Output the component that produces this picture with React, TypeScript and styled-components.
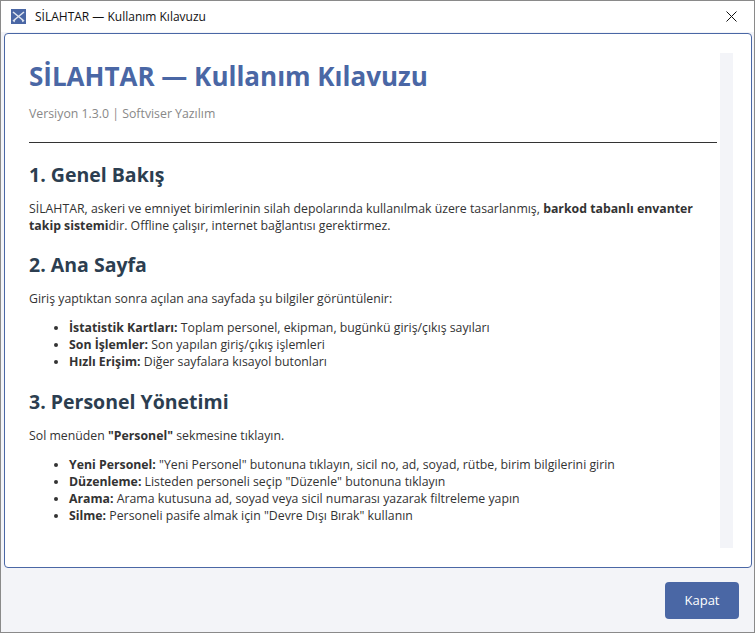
import React from 'react';
import styled, { createGlobalStyle } from 'styled-components';

const Global = createGlobalStyle`
  html, body { margin: 0; padding: 0; background: #f3f4f8; }
  body { font-family: "Open Sans", "Noto Sans", sans-serif; }
  * { box-sizing: border-box; }
`;

const Window = styled.div`
  width: 755px;
  height: 633px;
  border: 1px solid #8a8a8a;
  display: flex;
  flex-direction: column;
  background: #f3f4f8;
`;

const TitleBar = styled.div`
  height: 31px;
  background: #fff;
  display: flex;
  align-items: center;
  padding-left: 10px;
  font-size: 12px;
  color: #111;
`;

const TitleText = styled.span`
  margin-left: 9px;
  flex: 1;
`;

const CloseBtn = styled.div`
  width: 46px;
  display: flex;
  justify-content: center;
  align-items: center;
`;

const Panel = styled.div`
  margin: 1px 2px 0 3px;
  height: 535px;
  background: #fff;
  border: 1px solid #4a67a5;
  border-radius: 4px;
  display: flex;
  overflow: hidden;
`;

const Scroll = styled.div`
  flex: 1;
  padding: 18px 3px 0 24px;
  overflow: hidden;
  color: #333;
  font-size: 12.3px;
`;

const Track = styled.div`
  width: 13px;
  margin: 19px 18px 19px 0;
  background: #f3f4f8;
`;

const H1 = styled.h1`
  margin: 7px 0 0;
  font-size: 26px;
  font-weight: 700;
  color: #4a67a5;
  line-height: 34px;
`;

const Version = styled.div`
  margin-top: 12px;
  color: #888;
  font-size: 12.3px;
`;

const Rule = styled.hr`
  border: none;
  border-top: 1px solid #333;
  margin: 20px 0 18px;
`;

const H2 = styled.h2`
  margin: 0 0 11px;
  font-size: 19.5px;
  font-weight: 700;
  color: #2c3e50;
  line-height: 28px;
`;

const P = styled.p`
  margin: 0 0 17px;
  line-height: 17px;
  width: 680px;
`;

const List = styled.ul`
  margin: -5px 0 18px;
  padding-left: 40px;
  line-height: 17px;
`;

const App: React.FC = () => (
  <Window>
    <Global />
    <TitleBar>
      <svg width="15" height="15" viewBox="0 0 15 15">
        <rect width="15" height="15" fill="#4a67a5" />
        <path d="M2 3 L13 12 M13 3 L2 12" stroke="#dde3ee" strokeWidth="1.6" />
        <path d="M4 10 L3 13 M11 10 L12 13" stroke="#dde3ee" strokeWidth="1.2" />
      </svg>
      <TitleText>SİLAHTAR — Kullanım Kılavuzu</TitleText>
      <CloseBtn>
        <svg width="11" height="11" viewBox="0 0 11 11">
          <path d="M0.5 0.5 L10.5 10.5 M10.5 0.5 L0.5 10.5" stroke="#111" strokeWidth="1" />
        </svg>
      </CloseBtn>
    </TitleBar>
    <Panel>
      <Scroll>
        <H1>SİLAHTAR — Kullanım Kılavuzu</H1>
        <Version>Versiyon 1.3.0 | Softviser Yazılım</Version>
        <Rule />
        <H2>1. Genel Bakış</H2>
        <P>
          SİLAHTAR, askeri ve emniyet birimlerinin silah depolarında kullanılmak üzere tasarlanmış,{' '}
          <b>barkod tabanlı envanter takip sistemi</b>dir. Offline çalışır, internet bağlantısı gerektirmez.
        </P>
        <H2>2. Ana Sayfa</H2>
        <P>Giriş yaptıktan sonra açılan ana sayfada şu bilgiler görüntülenir:</P>
        <List>
          <li><b>İstatistik Kartları:</b> Toplam personel, ekipman, bugünkü giriş/çıkış sayıları</li>
          <li><b>Son İşlemler:</b> Son yapılan giriş/çıkış işlemleri</li>
          <li><b>Hızlı Erişim:</b> Diğer sayfalara kısayol butonları</li>
        </List>
        <H2>3. Personel Yönetimi</H2>
        <P>Sol menüden <b>"Personel"</b> sekmesine tıklayın.</P>
        <List>
          <li><b>Yeni Personel:</b> "Yeni Personel" butonuna tıklayın, sicil no, ad, soyad, rütbe, birim bilgilerini girin</li>
          <li><b>Düzenleme:</b> Listeden personeli seçip "Düzenle" butonuna tıklayın</li>
          <li><b>Arama:</b> Arama kutusuna ad, soyad veya sicil numarası yazarak filtreleme yapın</li>
          <li><b>Silme:</b> Personeli pasife almak için "Devre Dışı Bırak" kullanın</li>
        </List>
      </Scroll>
      <Track />
    </Panel>
    <Footer>
      <Button>Kapat</Button>
    </Footer>
  </Window>
);

const Footer = styled.div`
  flex: 1;
  display: flex;
  justify-content: flex-end;
  align-items: center;
  padding-right: 15px;
`;

const Button = styled.button`
  width: 74px;
  height: 37px;
  background: #4a67a5;
  color: #fff;
  border: none;
  border-radius: 4px;
  font-family: inherit;
  font-size: 13px;
`;

export default App;
